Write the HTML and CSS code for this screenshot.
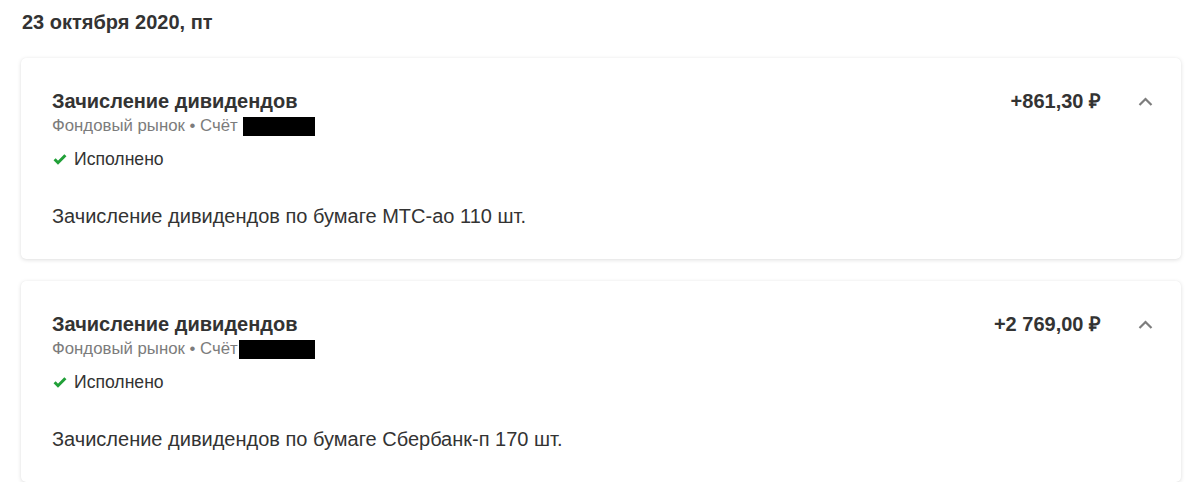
FILE: index.html
```html
<!DOCTYPE html>
<html lang="ru">
<head>
<meta charset="utf-8">
<link rel="stylesheet" href="styles.css">
</head>
<body>
<div class="page">
  <h2 class="date">23 октября 2020, пт</h2>

  <div class="card">
    <div class="card-head">
      <div class="info">
        <div class="title">Зачисление дивидендов</div>
        <div class="sub">Фондовый рынок • Счёт <span class="redact"></span></div>
        <div class="status">
          <svg class="check" width="14" height="12" viewBox="0 0 14 12"><path d="M1.6 6.3 L5 9.7 L12.4 2.2" fill="none" stroke="#21a038" stroke-width="3"/></svg>
          <span>Исполнено</span>
        </div>
      </div>
      <div class="amount">+861,30 ₽</div>
      <div class="chev"><svg width="15" height="9" viewBox="0 0 15 9"><path d="M1.5 8 L7.5 2 L13.5 8" fill="none" stroke="#7d7d7d" stroke-width="2.2"/></svg></div>
    </div>
    <div class="desc">Зачисление дивидендов по бумаге МТС-ао 110 шт.</div>
  </div>

  <div class="card">
    <div class="card-head">
      <div class="info">
        <div class="title">Зачисление дивидендов</div>
        <div class="sub">Фондовый рынок • Счёт<span class="redact redact-wide"></span></div>
        <div class="status">
          <svg class="check" width="14" height="12" viewBox="0 0 14 12"><path d="M1.6 6.3 L5 9.7 L12.4 2.2" fill="none" stroke="#21a038" stroke-width="3"/></svg>
          <span>Исполнено</span>
        </div>
      </div>
      <div class="amount">+2 769,00 ₽</div>
      <div class="chev"><svg width="15" height="9" viewBox="0 0 15 9"><path d="M1.5 8 L7.5 2 L13.5 8" fill="none" stroke="#7d7d7d" stroke-width="2.2"/></svg></div>
    </div>
    <div class="desc">Зачисление дивидендов по бумаге Сбербанк-п 170 шт.</div>
  </div>
</div>
</body>
</html>
```

FILE: styles.css
```css
html, body {
  margin: 0;
  padding: 0;
  background: #ffffff;
}
body {
  font-family: "Liberation Sans", Arial, sans-serif;
  color: #333333;
}
.page {
  padding: 0 18px 0 21px;
}
.date {
  margin: 0;
  padding: 10px 0 0 1px;
  font-size: 20px;
  line-height: 24px;
  font-weight: bold;
  color: #333;
}
.card {
  margin-top: 24px;
  background: #fff;
  border-radius: 5px;
  box-shadow: 0 1px 4px rgba(0,0,0,0.13), 0 0 1px rgba(0,0,0,0.06);
  padding: 31px 24px 31px 31px;
}
.card + .card {
  margin-top: 22px;
}
.card-head {
  display: flex;
  align-items: flex-start;
}
.info {
  flex: 1;
}
.title {
  font-size: 20px;
  line-height: 24px;
  font-weight: bold;
  color: #333;
}
.sub {
  margin-top: 3px;
  font-size: 16.8px;
  line-height: 20px;
  color: #7c7c7c;
  display: flex;
  align-items: center;
}
.redact {
  display: inline-block;
  width: 72px;
  height: 19px;
  background: #000;
  margin-left: 5px;
}
.redact-wide {
  width: 76px;
  margin-left: 1px;
}
.status {
  margin-top: 13px;
  display: flex;
  align-items: center;
  font-size: 17.6px;
  line-height: 20px;
  color: #333;
}
.check {
  margin: 0 7px 0 1px;
}
.amount {
  font-size: 20px;
  line-height: 24px;
  font-weight: bold;
  color: #333;
  margin-right: 32px;
}
.chev {
  width: 24px;
  height: 24px;
  display: flex;
  align-items: center;
  justify-content: center;
}
.desc {
  margin-top: 35px;
  font-size: 20px;
  line-height: 24px;
  color: #333;
}
```
